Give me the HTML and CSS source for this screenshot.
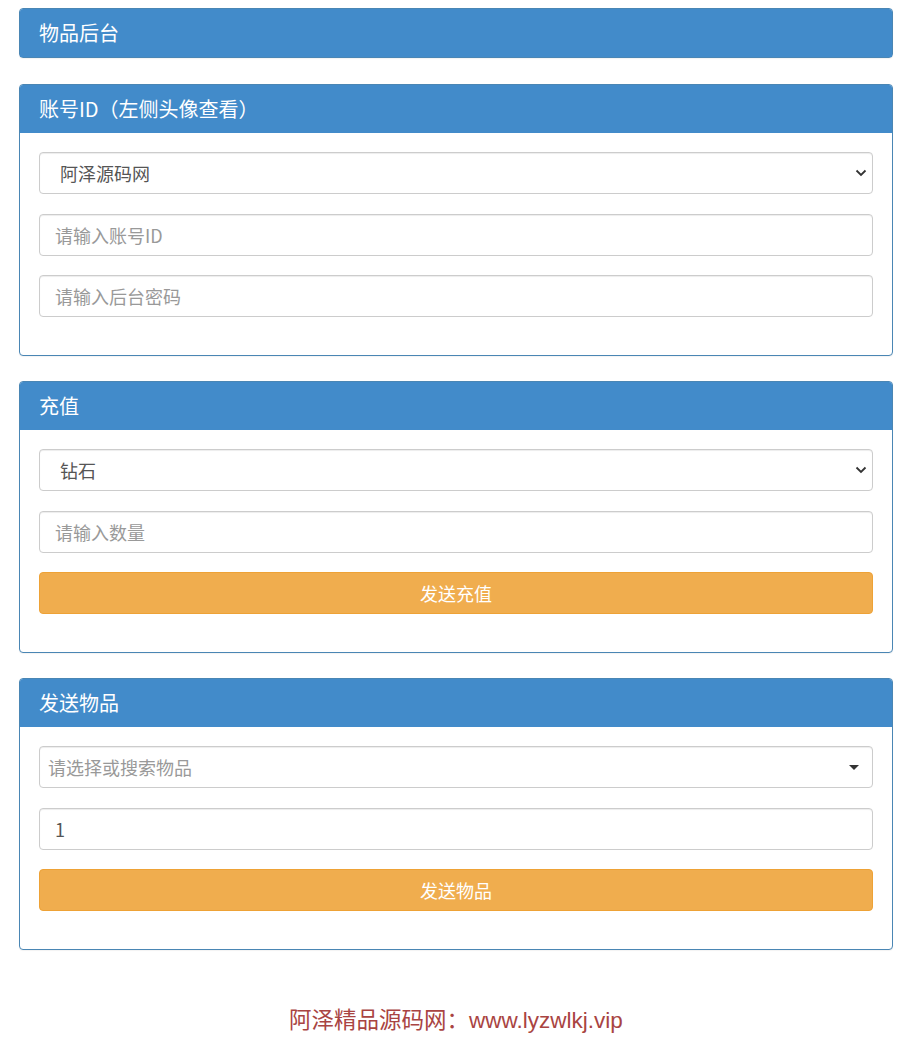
FILE: index.html
```html
<!DOCTYPE html>
<html lang="zh-CN">
<head>
<meta charset="utf-8">
<title>物品后台</title>
<link rel="stylesheet" href="styles.css">
</head>
<body>
<div class="container">
  <div class="panel panel-title">
    <div class="panel-heading">物品后台</div>
  </div>

  <div class="panel">
    <div class="panel-heading">账号ID（左侧头像查看）</div>
    <div class="panel-body">
      <div class="select-wrap">
        <select class="form-control select">
          <option>阿泽源码网</option>
        </select>
        <svg class="chev" width="12" height="8" viewBox="0 0 12 8"><path d="M1.5 1.5 L6 6 L10.5 1.5" fill="none" stroke="#333" stroke-width="1.8"/></svg>
      </div>
      <input class="form-control" type="text" placeholder="请输入账号ID">
      <input class="form-control" type="password" placeholder="请输入后台密码">
    </div>
  </div>

  <div class="panel">
    <div class="panel-heading">充值</div>
    <div class="panel-body">
      <div class="select-wrap">
        <select class="form-control select">
          <option>钻石</option>
        </select>
        <svg class="chev" width="12" height="8" viewBox="0 0 12 8"><path d="M1.5 1.5 L6 6 L10.5 1.5" fill="none" stroke="#333" stroke-width="1.8"/></svg>
      </div>
      <input class="form-control" type="text" placeholder="请输入数量">
      <button class="btn">发送充值</button>
    </div>
  </div>

  <div class="panel">
    <div class="panel-heading">发送物品</div>
    <div class="panel-body">
      <div class="form-control combo">
        <span class="combo-text">请选择或搜索物品</span>
        <span class="caret"></span>
      </div>
      <input class="form-control" type="text" value="1">
      <button class="btn">发送物品</button>
    </div>
  </div>

  <div class="footer">阿泽精品源码网：www.lyzwlkj.vip</div>
</div>
</body>
</html>
```

FILE: styles.css
```css
* { box-sizing: border-box; }
html, body {
  margin: 0;
  padding: 0;
  background: #fff;
}
body {
  font-family: "Noto Sans CJK SC", "Liberation Sans", sans-serif;
  color: #333;
}
.container {
  padding: 8px 25px 0 19px;
}
.panel {
  border: 1px solid #4a86b4;
  border-radius: 4px;
  margin-bottom: 25px;
  background: #fff;
  box-shadow: 0 1px 1px rgba(0,0,0,.05);
}
.panel-title {
  margin-bottom: 26px;
}
.panel-heading {
  background: #428bca;
  color: #fff;
  height: 48px;
  line-height: 48px;
  padding: 0 19px;
  font-size: 20px;
  border-radius: 3px 3px 0 0;
}
.panel-body {
  padding: 19px 19px 38px 19px;
  display: flex;
  flex-direction: column;
  gap: 19.5px;
}
.form-control {
  display: block;
  width: 100%;
  height: 42px;
  border: 1px solid #ccc;
  border-radius: 4px;
  padding: 0 15px;
  font-family: "Noto Sans CJK SC", "Liberation Sans", sans-serif;
  font-size: 18px;
  color: #555;
  background: #fff;
  box-shadow: inset 0 1px 1px rgba(0,0,0,.075);
  outline: none;
}
.form-control::placeholder { color: #999; }
.select-wrap { position: relative; }
.select {
  appearance: none;
  -webkit-appearance: none;
  padding-left: 20px;
}
.chev {
  position: absolute;
  right: 6px;
  top: 17px;
  pointer-events: none;
}
.combo {
  display: flex;
  align-items: center;
  justify-content: space-between;
  padding: 0 13px 0 8px;
}
.combo-text { color: #999; }
.caret {
  width: 0;
  height: 0;
  border-left: 5px solid transparent;
  border-right: 5px solid transparent;
  border-top: 5px solid #333;
}
.btn {
  display: block;
  width: 100%;
  height: 42px;
  border: 1px solid #eea236;
  border-radius: 4px;
  background: #f0ad4e;
  color: #fff;
  font-family: "Noto Sans CJK SC", "Liberation Sans", sans-serif;
  font-size: 18px;
  cursor: pointer;
}
.footer {
  text-align: center;
  color: #a94442;
  font-family: "Liberation Sans", "Noto Sans CJK SC", sans-serif;
  font-size: 22.5px;
  margin-top: 52px;
  padding-left: 0;
}
```
